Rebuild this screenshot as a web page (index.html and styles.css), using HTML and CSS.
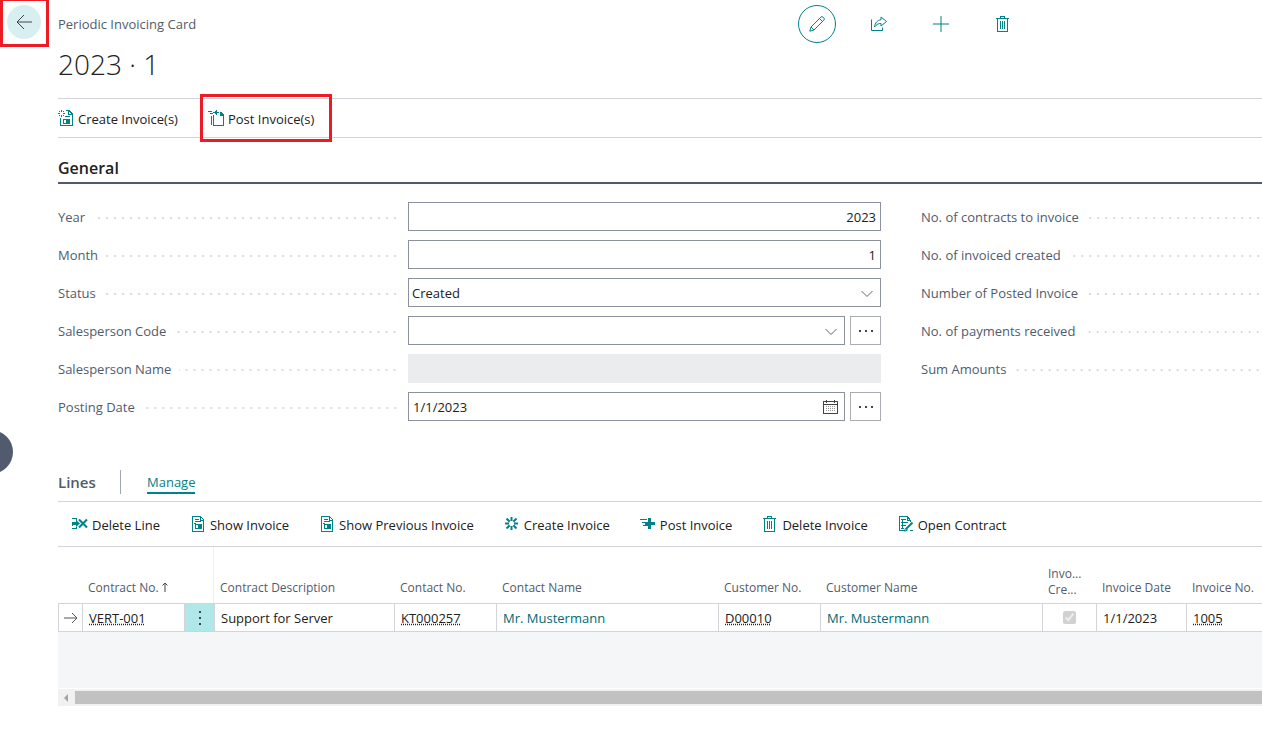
FILE: index.html
```html
<!DOCTYPE html>
<html lang="en">
<head>
<meta charset="utf-8">
<title>Periodic Invoicing Card</title>
<link rel="stylesheet" href="styles.css">
</head>
<body>
<svg class="sprite" aria-hidden="true">
  <symbol id="i-trash" viewBox="0 0 16 16"><path d="M1 2.500h13M5.500 2V.5h4V2M2.500 3v12.500h10V3M5.500 5v8M7.500 5v8M9.500 5v8"/></symbol>
  <symbol id="i-doc" viewBox="0 0 16 16"><path d="M2.500.5h8l3 3v12h-11zM10.500 1v3H13M4.500 3.500h4M4.500 5.500h6"/><path d="M5.500 8.500h6v4h-6z"/><path class="solid" d="M8 9h3v4H8zM4 7h2v1H4z"/></symbol>
  <symbol id="i-chevron" viewBox="0 0 12 8"><path d="M.5 1 6 6.500 11.500 1"/></symbol>
</svg>
<div class="page">
  <aside class="rail">
    <button class="back marked" type="button" aria-label="Back"><svg viewBox="0 0 16 16"><path d="M16 8H1M8 1 1 8l7 7"/></svg></button>
    <button class="handle" type="button" aria-label="Open pane"></button>
  </aside>
  <main class="card">
    <header class="top">
      <p class="crumb">Periodic Invoicing Card</p>
      <div class="tools">
        <button class="tool ring" type="button" aria-label="Edit"><svg viewBox="0 0 16 16"><path d="M.8 15.200 2 11 11.800 1.200a1.600 1.600 0 0 1 2.300 0l.7.7a1.600 1.600 0 0 1 0 2.300L5 14zM2 11l3 3M10.500 2.500l3 3"/></svg></button>
        <button class="tool" type="button" aria-label="Share"><svg viewBox="0 0 16 16"><path d="M.5 3.500v11h11v-3M10 1l5.500 4.500L10 10V7.500C7.500 7.300 5.500 8.500 3.500 11 4 7 6.500 4 10 3.700z"/></svg></button>
        <button class="tool" type="button" aria-label="New"><svg viewBox="0 0 16 16"><path d="M8 0v16M0 8h16"/></svg></button>
        <button class="tool" type="button" aria-label="Delete"><svg class="crisp"><use href="#i-trash"/></svg></button>
      </div>
    </header>
    <h1>2023 · 1</h1>
    <nav class="actions">
      <button class="action" type="button"><svg class="crisp" viewBox="0 0 16 16"><path d="M8 .5h3l3 3v12H2.500V8M10.500 1v3.500H14M7 6.500h5M5.500 9.500h6v4h-6z"/><path d="M3.500 0v2M3.500 5v2M0 3.500h2M5 3.500h2M1 1l1 1M5 5l1 1M6 1 5 2M2 5 1 6"/><path class="solid" d="M8 10h3v4H8z"/></svg>Create Invoice(s)</button>
      <button class="action marked" type="button"><svg class="crisp" viewBox="0 0 16 16"><path d="M0 1.500h4M2 3.500h3M3.500 6v9M5.500 5v10.500h10V5.500h-3v-4M5 2.500h6M8 0v5M13 2.500l3 3"/><path class="solid" d="M7 1h2v3H7zM13 2l3 3h-3z"/></svg>Post Invoice(s)</button>
    </nav>

    <section>
      <h2 class="general">General</h2>
      <div class="fields">
        <div class="column">
          <div class="field"><label for="year">Year</label><div class="control"><input id="year" class="box number" value="2023"></div></div>
          <div class="field"><label for="month">Month</label><div class="control"><input id="month" class="box number" value="1"></div></div>
          <div class="field"><label for="status">Status</label><div class="control"><div class="combo"><select id="status" class="box"><option>Created</option></select><svg class="chevron"><use href="#i-chevron"/></svg></div></div></div>
          <div class="field"><label for="code">Salesperson Code</label><div class="control"><div class="combo"><input id="code" class="box"><svg class="chevron"><use href="#i-chevron"/></svg></div><button class="more" type="button" aria-label="Look up salesperson"><i></i><i></i><i></i></button></div></div>
          <div class="field"><label for="name">Salesperson Name</label><div class="control"><input id="name" class="box readonly" readonly></div></div>
          <div class="field"><label for="date">Posting Date</label><div class="control"><div class="combo"><input id="date" class="box" value="1/1/2023"><svg class="calendar" viewBox="0 0 16 14"><path d="M.5 1.500h14v12H.5zM1 4.500h13M3.500 0v3M11.500 0v3"/><path class="days" d="M3 6.500h10M3 8.500h10M3 10.500h10"/></svg></div><button class="more" type="button" aria-label="Pick posting date"><i></i><i></i><i></i></button></div></div>
        </div>
        <div class="column">
          <div class="field"><span class="caption">No. of contracts to invoice</span></div>
          <div class="field"><span class="caption">No. of invoiced created</span></div>
          <div class="field"><span class="caption">Number of Posted Invoice</span></div>
          <div class="field"><span class="caption">No. of payments received</span></div>
          <div class="field"><span class="caption">Sum Amounts</span></div>
        </div>
      </div>
    </section>

    <section>
      <div class="lines-head"><h2>Lines</h2><button class="tab" type="button">Manage</button></div>
      <div class="line-actions">
        <button class="action" type="button"><svg viewBox="0 0 16 16"><path class="crisp" d="M0 2.500h4.500v2M0 12.500h4.500v-2M0 6v4"/><path class="solid" d="M0 6h4V4l4 3.500L4 11V9H0z"/><path class="thick" d="m7 3.500 8 8M15 3.500l-8 8"/></svg>Delete Line</button>
        <button class="action" type="button"><svg class="crisp"><use href="#i-doc"/></svg>Show Invoice</button>
        <button class="action" type="button"><svg class="crisp"><use href="#i-doc"/></svg>Show Previous Invoice</button>
        <button class="action" type="button"><svg viewBox="0 0 16 16"><path class="thick" d="M7.500 1v4M7.500 10v4M1 7.500h4M10 7.500h4M2.500 2.500l3.200 3.200M9.300 9.300l3.200 3.200M12.500 2.500 9.300 5.700M5.700 9.300l-3.200 3.200"/></svg>Create Invoice</button>
        <button class="action" type="button"><svg class="crisp" viewBox="0 0 16 16"><path d="M0 3.500h7M2 6.500h5M3 9.500h5"/><path class="solid" d="M8 2h3v4h4v3h-4v4H8V9H5V6h3z"/></svg>Post Invoice</button>
        <button class="action" type="button"><svg class="crisp"><use href="#i-trash"/></svg>Delete Invoice</button>
        <button class="action" type="button"><svg viewBox="0 0 16 16"><path class="crisp" d="M12.500 6V4.500l-3-4h-8v14H7M9.500 1v3.500H12M3 3.500h5M3 6.500h7M3 9.500h5M3 12.500h3M4.500 3v10"/><path class="thick" d="m8 13 6.500-6.500"/><path d="m6.500 15.200 1-3 2 2zM12 14.500h3"/></svg>Open Contract</button>
      </div>
      <div class="grid">
        <table>
          <colgroup><col class="w-mark"><col class="w-no"><col class="w-menu"><col class="w-desc"><col class="w-no"><col class="w-name"><col class="w-no"><col class="w-name"><col class="w-check"><col class="w-date"><col class="w-no"></colgroup>
          <thead>
            <tr><th></th><th>Contract No. <svg class="sort" viewBox="0 0 6 10"><path d="M3 10V1M.5 3.500 3 1l2.500 2.500"/></svg></th><th class="frozen"></th><th>Contract Description</th><th>Contact No.</th><th>Contact Name</th><th>Customer No.</th><th>Customer Name</th><th class="two-line">Invo...<br>Cre...</th><th>Invoice Date</th><th>Invoice No.</th></tr>
          </thead>
          <tbody>
            <tr>
              <td class="mark"><svg viewBox="0 0 14 12"><path d="M0 6h13M8 1l5 5-5 5"/></svg></td>
              <td><a class="drill" href="#">VERT-001</a></td>
              <td class="menu"><button type="button" aria-label="Row menu"><i></i><i></i><i></i></button></td>
              <td>Support for Server</td>
              <td><a class="drill" href="#">KT000257</a></td>
              <td><a class="link" href="#">Mr. Mustermann</a></td>
              <td><a class="drill" href="#">D00010</a></td>
              <td><a class="link" href="#">Mr. Mustermann</a></td>
              <td class="check"><input type="checkbox" aria-label="Invoice created" checked disabled></td>
              <td>1/1/2023</td>
              <td><a class="drill" href="#">1005</a></td>
            </tr>
          </tbody>
        </table>
      </div>
      <div class="scroll"><span class="arrow"></span><span class="thumb"></span></div>
    </section>
  </main>
</div>
</body>
</html>
```
FILE: styles.css
```css
* { box-sizing: border-box; }
body {
  margin: 0;
  background: #fff;
  color: #212121;
  font: 13px/20px "Open Sans", "Noto Sans", sans-serif;
  overflow-x: hidden;
}
button, input, select { font: inherit; color: inherit; }
button { margin: 0; padding: 0; border: 0; background: none; }
h1, h2, p { margin: 0; }
a { color: inherit; }
svg { flex: none; fill: none; stroke: currentColor; }
.sprite { position: absolute; width: 0; height: 0; }
.crisp { shape-rendering: crispEdges; }
.solid { fill: currentColor; stroke: none; }
.thick { stroke-width: 2; }

.page { display: grid; grid-template-columns: 58px minmax(0, 1fr); }
.rail { padding: 5px 7px; }
.back {
  position: relative;
  display: grid;
  place-items: center;
  width: 34px;
  height: 34px;
  border-radius: 50%;
  background: #d8eff1;
  color: #444;
}
.back svg { width: 16px; height: 16px; }
.marked::after {
  content: "";
  position: absolute;
  border: 3px solid #ed1c24;
  pointer-events: none;
}
.back.marked::after { inset: -7px -8px -8px -7px; }
.handle {
  position: absolute;
  top: 430px;
  left: -31px;
  width: 44px;
  height: 44px;
  border-radius: 50%;
  background: #505c6d;
}

.top {
  display: flex;
  justify-content: space-between;
  align-items: center;
  height: 48px;
  padding-right: 240px;
}
.crumb { color: #505c6d; }
.tools { display: flex; gap: 24px; color: #00828a; }
.tool {
  display: grid;
  place-items: center;
  width: 38px;
  height: 38px;
  border-radius: 50%;
}
.tool svg { width: 16px; height: 16px; }
.ring { border: 1px solid #00828a; }
h1 { height: 50px; font-size: 28px; font-weight: 300; line-height: 32px; }

.actions {
  display: flex;
  gap: 30px;
  height: 40px;
  border: solid #d2d4da;
  border-width: 1px 0;
}
.action { position: relative; display: flex; align-items: center; gap: 4px; padding-top: 2px; white-space: nowrap; }
.action svg { width: 16px; height: 16px; margin-bottom: 2px; color: #00828a; }
.action.marked::after { inset: -5px -18px -5px -8px; }

h2 { font-size: 16px; font-weight: 600; line-height: 24px; }
.general { padding: 18px 0 2px; border-bottom: 2px solid #505c6d; }
.fields { display: grid; grid-template-columns: minmax(0, 1fr) 341px; gap: 40px; padding-top: 18px; }
.column { display: flex; flex-direction: column; gap: 9px; }
.field { display: flex; align-items: center; height: 29px; color: #505c6d; }
.field label, .caption {
  display: flex;
  flex: 0 0 339px;
  align-items: center;
  gap: 8px;
  white-space: nowrap;
}
.field label::after, .caption::after {
  content: "";
  flex: 1;
  height: 2px;
  margin-top: 2px;
  background: linear-gradient(90deg, #d9dbde 2px, transparent 2px) right -5px top 0 / 8px 2px repeat-x;
}
.control { display: flex; flex: 1; gap: 5px; margin-left: 11px; color: #212121; }
.combo { position: relative; flex: 1; }
.box {
  display: block;
  appearance: none;
  width: 100%;
  height: 29px;
  padding: 0 4px;
  border: 1px solid #8b929e;
  border-radius: 0;
  background: #fff;
}
select.box { padding: 0 3px; }
.number { text-align: right; }
.readonly { border: 0; background: #ebecee; }
.chevron { position: absolute; top: 12px; right: 8px; width: 12px; height: 8px; color: #666; pointer-events: none; }
.calendar { position: absolute; top: 8px; right: 6px; width: 16px; height: 14px; color: #444; shape-rendering: crispEdges; }
.days { stroke: #999; stroke-dasharray: 1 1; }
.more {
  display: flex;
  justify-content: center;
  align-items: center;
  gap: 4px;
  width: 31px;
  height: 29px;
  border: 1px solid #a9acb2;
}
.more i, .menu i { width: 2px; height: 2px; background: #444; }

.lines-head {
  display: flex;
  align-items: center;
  height: 39px;
  margin-top: 42px;
  border-bottom: 1px solid #d2d4da;
}
.lines-head h2 { width: 63px; border-right: 1px solid #a0a6b2; color: #505c6d; font-size: 15px; }
.tab { margin: 2px 0 0 26px; border-bottom: 2px solid #00828a; color: #00828a; }
.line-actions {
  display: flex;
  gap: 30px;
  height: 45px;
  padding-left: 14px;
  border-bottom: 1px solid #d2d4da;
}

.grid { height: 141px; overflow: hidden; background: #f5f6f8; }
table { table-layout: fixed; width: 1230px; border-spacing: 0; }
.w-mark { width: 24px; }
.w-no { width: 102px; }
.w-menu { width: 30px; }
.w-desc { width: 180px; }
.w-name { width: 222px; }
.w-check { width: 54px; }
.w-date { width: 90px; }
th {
  height: 56px;
  padding: 0 0 7px 6px;
  background: #fff;
  color: #505c6d;
  font-size: 12px;
  font-weight: 400;
  line-height: 16px;
  text-align: left;
  vertical-align: bottom;
  white-space: nowrap;
}
.two-line { padding-bottom: 5px; }
.frozen { border-right: 1px solid #eef0f3; }
.sort { width: 6px; height: 10px; color: #444; }
td {
  height: 29px;
  padding: 0 0 0 6px;
  border: solid #d2d4da;
  border-width: 1px 0 1px 1px;
  background: #fff;
  white-space: nowrap;
}
.mark { padding: 0 5px; }
.mark svg { display: block; width: 14px; height: 12px; color: #555; }
.menu { padding: 0; background: #b0e8ea; }
.menu button { display: flex; flex-direction: column; align-items: center; justify-content: center; gap: 4px; width: 100%; height: 27px; }
.check { padding: 0; text-align: center; }
.check input { display: block; margin: 0 auto; }
.drill { text-decoration: underline dotted; text-underline-offset: 1px; }
.link { color: #006b74; text-decoration: none; }

.scroll {
  display: flex;
  align-items: center;
  height: 17px;
  margin-top: 1px;
  background: #f1f1f1;
}
.arrow { width: 17px; padding-left: 6px; }
.arrow::before { content: ""; display: block; width: 0; border: solid transparent; border-width: 4px 4px 4px 0; border-right-color: #a3a3a3; }
.thumb { flex: 1; height: 13px; background: #c1c1c1; }
```
